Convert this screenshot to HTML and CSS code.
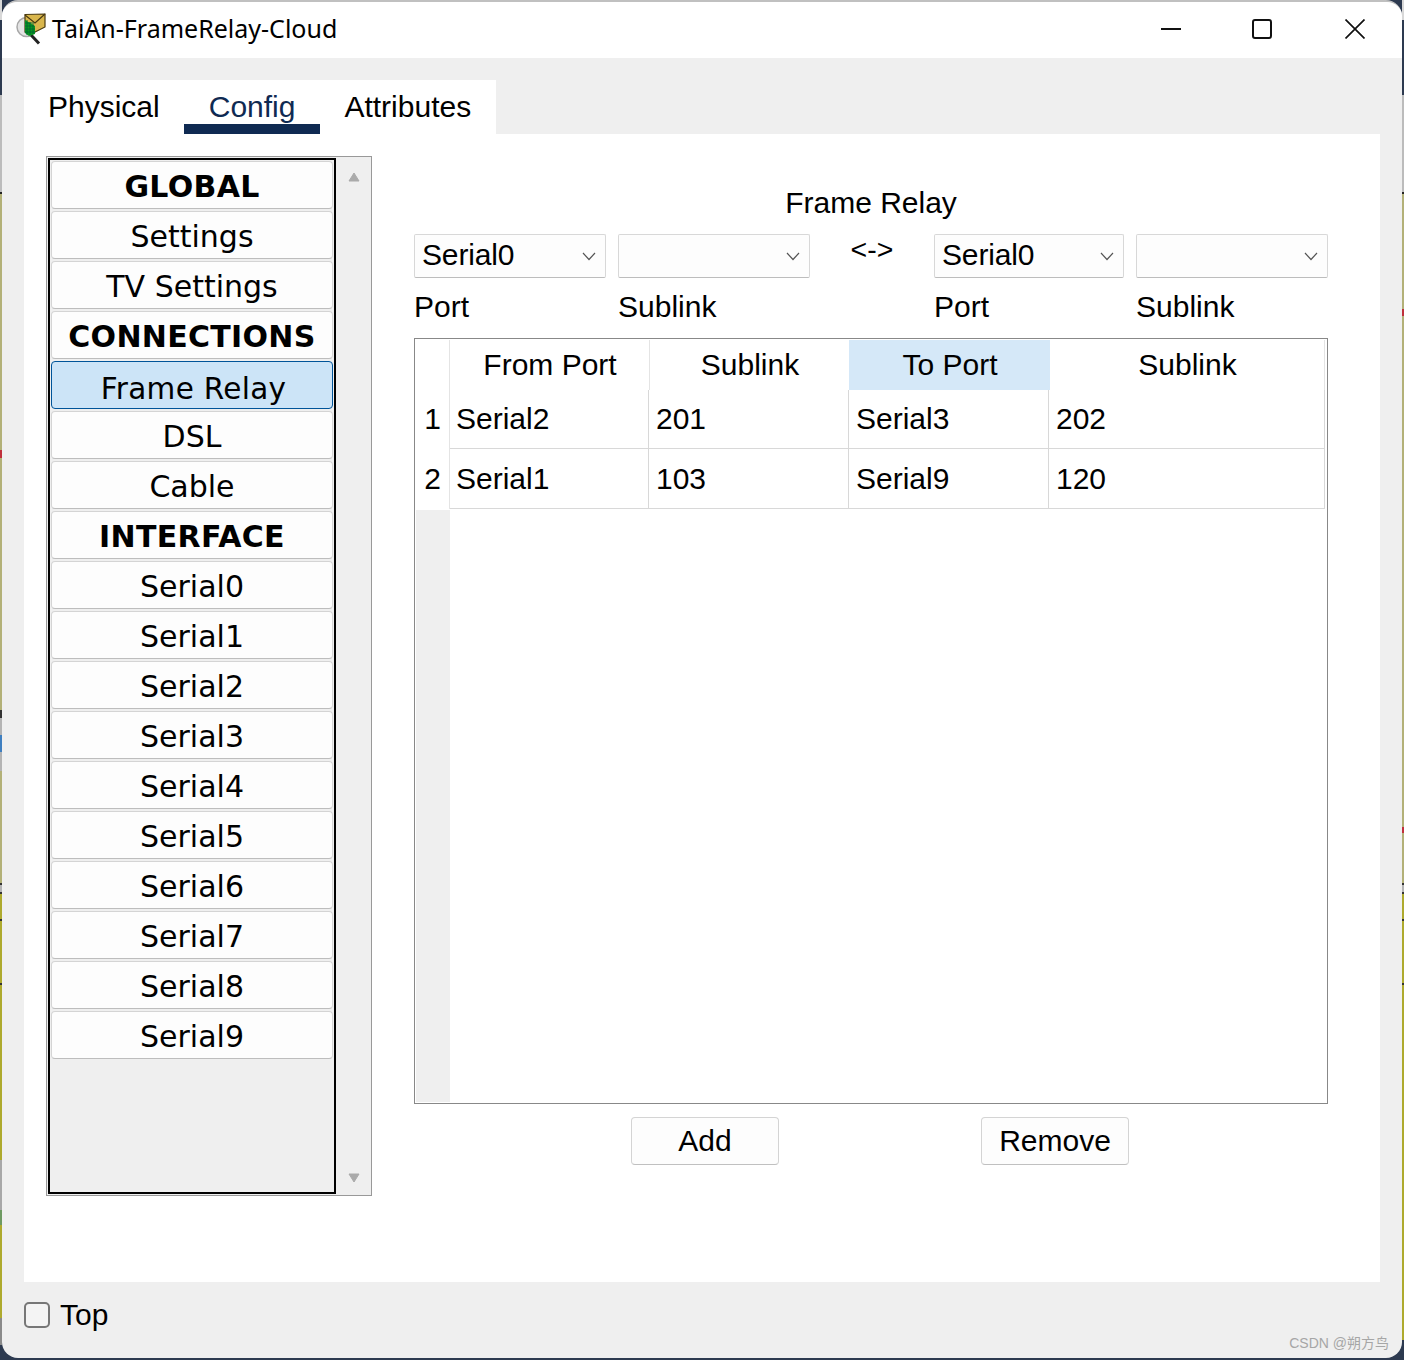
FILE: index.html
```html
<!DOCTYPE html>
<html lang="en">
<head>
<meta charset="utf-8">
<title>TaiAn-FrameRelay-Cloud</title>
<link rel="stylesheet" href="styles.css">
</head>
<body>
<div class="window">
  <header class="titlebar">
    <svg class="app-icon" width="32" height="32" viewBox="0 0 32 32">
      <circle cx="11.5" cy="14" r="9.5" fill="#e4e4e4" stroke="#a8a8a8" stroke-width="1.5"/>
      <path d="M16 22l8 8.5" stroke="#222" stroke-width="3" fill="none"/>
      <path d="M10 1.5l20-.5v13L16 21l-6-2z" fill="#d9b64c" stroke="#4a3a10" stroke-width="1.2"/>
      <path d="M10 2l10 8 10-9" fill="none" stroke="#4a3a10" stroke-width="1.2"/>
      <path d="M10 7l10 6v8l-6 2-4-3z" fill="#0a9a1e"/>
      <path d="M12 7v15M15 9v13M18 11v10M10 10h9M10 13h9M10 16h10M10 19h10" stroke="#063" stroke-width=".9"/>
    </svg>
    <span class="title-text">TaiAn-FrameRelay-Cloud</span>
    <div class="controls">
      <svg width="20" height="20" viewBox="0 0 20 20"><path d="M0 10h20" stroke="#111" stroke-width="2"/></svg>
      <svg width="20" height="20" viewBox="0 0 20 20"><rect x="1" y="1" width="18" height="18" rx="2" fill="none" stroke="#111" stroke-width="2"/></svg>
      <svg class="close" width="20" height="20" viewBox="0 0 20 20"><path d="M.5.5l19 19M19.5.5l-19 19" stroke="#111" stroke-width="1.7"/></svg>
    </div>
  </header>

  <main class="body">
    <nav class="tabs">
      <span class="tab">Physical</span>
      <span class="tab tab-active">Config</span>
      <span class="tab">Attributes</span>
    </nav>

    <section class="pane">
      <aside class="sidebar">
        <div class="menu">
          <button class="item head">GLOBAL</button>
          <button class="item">Settings</button>
          <button class="item">TV Settings</button>
          <button class="item head">CONNECTIONS</button>
          <button class="item selected">Frame Relay</button>
          <button class="item">DSL</button>
          <button class="item">Cable</button>
          <button class="item head">INTERFACE</button>
          <button class="item">Serial0</button>
          <button class="item">Serial1</button>
          <button class="item">Serial2</button>
          <button class="item">Serial3</button>
          <button class="item">Serial4</button>
          <button class="item">Serial5</button>
          <button class="item">Serial6</button>
          <button class="item">Serial7</button>
          <button class="item">Serial8</button>
          <button class="item">Serial9</button>
        </div>
        <div class="scroll">
          <svg width="12" height="10" viewBox="0 0 12 10"><path d="M6 1l5 8H1z" fill="#aaa" stroke="#aaa" stroke-linejoin="round"/></svg>
          <svg width="12" height="10" viewBox="0 0 12 10"><path d="M1 1h10L6 9z" fill="#aaa" stroke="#aaa" stroke-linejoin="round"/></svg>
        </div>
      </aside>

      <div class="config">
        <h1 class="heading">Frame Relay</h1>
        <div class="form">
          <div class="select">Serial0<svg class="chev" width="14" height="9" viewBox="0 0 14 9"><path d="M1 1l6 6.5L13 1" fill="none" stroke="#555" stroke-width="1.2"/></svg></div>
          <div class="select"><svg class="chev" width="14" height="9" viewBox="0 0 14 9"><path d="M1 1l6 6.5L13 1" fill="none" stroke="#555" stroke-width="1.2"/></svg></div>
          <div class="arrow">&lt;-&gt;</div>
          <div class="select narrow">Serial0<svg class="chev" width="14" height="9" viewBox="0 0 14 9"><path d="M1 1l6 6.5L13 1" fill="none" stroke="#555" stroke-width="1.2"/></svg></div>
          <div class="select"><svg class="chev" width="14" height="9" viewBox="0 0 14 9"><path d="M1 1l6 6.5L13 1" fill="none" stroke="#555" stroke-width="1.2"/></svg></div>
          <label class="lbl">Port</label>
          <label class="lbl">Sublink</label>
          <span></span>
          <label class="lbl">Port</label>
          <label class="lbl">Sublink</label>
        </div>

        <div class="table">
          <div class="thead">
            <div class="corner"></div>
            <div class="th">From Port</div>
            <div class="th">Sublink</div>
            <div class="th th-sel">To Port</div>
            <div class="th th-last">Sublink</div>
          </div>
          <div class="tr">
            <div class="rh">1</div>
            <div class="td">Serial2</div>
            <div class="td">201</div>
            <div class="td">Serial3</div>
            <div class="td td-last">202</div>
          </div>
          <div class="tr">
            <div class="rh">2</div>
            <div class="td">Serial1</div>
            <div class="td">103</div>
            <div class="td">Serial9</div>
            <div class="td td-last">120</div>
          </div>
          <div class="filler"></div>
        </div>

        <div class="actions">
          <button class="btn">Add</button>
          <button class="btn">Remove</button>
        </div>
      </div>
    </section>

    <footer class="bottom">
      <span class="check"></span>
      <span>Top</span>
    </footer>
  </main>
  <span class="mark">CSDN @朔方鸟</span>
</div>
</body>
</html>
```
FILE: styles.css
```css
* { box-sizing: border-box; }
html, body { margin: 0; height: 1360px; overflow: hidden; }
body {
  width: 1404px;
  background-color: #2d3a50;
  background-image:
    linear-gradient(to bottom, #d8d8d8 0 20px, #2d3a50 20px 95px, #bcbcbc 95px 192px, #222 192px 194px, #b3b178 194px 450px, #c0303c 450px 458px, #b3b178 458px 710px, #333 710px 718px, #b4b4b4 718px 735px, #3f7fc0 735px 752px, #b4b4b4 752px 771px, #b3b178 771px 883px, #333 883px 885px, #b4b4b4 885px 892px, #333 892px 894px, #aeaa2e 894px 919px, #333 919px 921px, #aeaa2e 921px 983px, #333 983px 985px, #aeaa2e 985px 1160px, #a8a8a8 1160px 1210px, #6e9a62 1210px 1225px, #aeaa2e 1225px 1318px, #8a8a8a 1318px 1345px, #2d3a50 1345px),
    linear-gradient(to bottom, #d8d8d8 0 20px, #2d3a50 20px 95px, #bcbcbc 95px 192px, #222 192px 194px, #b3b178 194px 309px, #c0303c 309px 316px, #b3b178 316px 827px, #c0303c 827px 833px, #b3b178 833px 883px, #333 883px 885px, #b4b4b4 885px 892px, #333 892px 894px, #aeaa2e 894px 919px, #333 919px 921px, #aeaa2e 921px 983px, #333 983px 985px, #aeaa2e 985px 1340px, #2d3a50 1340px);
  background-size: 2px 1360px, 2px 1360px;
  background-position: left top, right top;
  background-repeat: no-repeat;
  font-family: "Liberation Sans", Arial, sans-serif;
  font-size: 30px;
  color: #000;
  padding: 0 2px;
}
.window {
  position: relative;
  height: 1358px;
  border-top: 2px solid #c0c0c0;
  border-radius: 16px;
  overflow: hidden;
  background: #efefef;
  display: flex;
  flex-direction: column;
}
.titlebar {
  height: 56px;
  background: #fff;
  display: flex;
  align-items: center;
  padding: 0 37px 2px 13px;
  flex: none;
}
.app-icon { margin-right: 5px; }
.title-text { font-family: "Noto Sans", sans-serif; font-size: 25px; color: #000; margin-bottom: 2px; }
.controls { margin-left: auto; display: flex; gap: 71px; align-items: center; }
.controls .close { margin-left: 2px; }
.body {
  flex: 1;
  display: flex;
  flex-direction: column;
  padding: 22px 22px 0;
}
.tabs { display: flex; align-self: flex-start; background: #fff; height: 54px; }
.tab { padding: 0 25px; line-height: 54px; }
.tab:first-child { padding: 0 24px; }
.tab:last-child { padding: 0 25px 0 24px; }
.tab-active { color: #0f2a52; box-shadow: inset 0 -10px 0 #0f2a52; }
.pane {
  height: 1148px;
  background: #fff;
  display: flex;
  padding: 22px 0 0 22px;
  gap: 42px;
  flex: none;
}
.sidebar {
  width: 326px;
  height: 1040px;
  border: 1px solid #999;
  padding: 1px 0 1px 1px;
  display: flex;
  background: #efefef;
}
.menu {
  width: 288px;
  border: 2px solid #000;
  padding: 1px;
  display: flex;
  flex-direction: column;
  gap: 2px;
  background: #efefef;
}
.item {
  height: 48px;
  width: 282px;
  flex: none;
  padding: 3px 0 0;
  border: 1px solid #d4d4d4;
  border-bottom: 1px solid #bdbdbd;
  border-radius: 4px;
  background: #fdfdfd;
  font-family: "DejaVu Sans", sans-serif;
  font-size: 30px;
  color: #000;
  text-align: center;
}
.head { font-weight: 700; letter-spacing: .3px; }
.selected { background: #cce4f7; border: 1px solid #005499; padding: 7px 0 0 3px; font-size: 29.5px; letter-spacing: .3px; }
.scroll {
  flex: 1;
  display: flex;
  flex-direction: column;
  justify-content: space-between;
  align-items: center;
  padding: 14px 0 11px;
}
.scroll svg { display: block; }
.config { width: 914px; padding-top: 29px; }
.heading {
  margin: 0 0 13px;
  font-size: 30px;
  font-weight: 400;
  line-height: 36px;
  text-align: center;
  width: 914px;
}
.form {
  display: grid;
  grid-template-columns: 204px 192px 124px 202px 192px;
  grid-template-rows: 44px 36px;
  row-gap: 11px;
}
.select {
  width: 192px;
  height: 44px;
  border: 1px solid #d8d8d8;
  border-bottom-color: #bdbdbd;
  border-radius: 2px;
  background: #fdfdfd;
  padding: 0 9px 3px 7px;
  display: flex;
  align-items: center;
  justify-content: space-between;
  line-height: 40px;
  letter-spacing: -.15px;
}
.select .chev { margin-top: 3px; }
.select.narrow { width: 190px; }
.chev { margin-left: auto; display: block; }
.arrow { text-align: center; font-size: 28.5px; line-height: 30px; }
.lbl { line-height: 36px; }
.table {
  margin-top: 13px;
  height: 766px;
  border: 1px solid #888;
  padding: 1px;
  display: flex;
  flex-direction: column;
}
.thead { display: flex; height: 50px; flex: none; }
.corner { width: 34px; border-right: 1px solid #e4e4e4; }
.th {
  width: 200px;
  padding-left: 1px;
  text-align: center;
  line-height: 50px;
  border-right: 1px solid #e4e4e4;
  background: #fff;
}
.th-sel { background: #d5e8f8; border-right: 0; width: 201px; margin-left: -1px; }
.th-last { width: 275px; margin-left: 0; }
.tr { display: flex; height: 60px; flex: none; }
.thead + .tr { height: 59px; }
.rh {
  width: 34px;
  flex: none;
  text-align: center;
  line-height: 58px;
  border-right: 1px solid #e4e4e4;
}
.td {
  width: 199px;
  flex: none;
  padding-left: 6px;
  line-height: 58px;
  border-right: 1px solid #d8d8d8;
  border-bottom: 1px solid #d8d8d8;
}
.td + .td { width: 200px; padding-left: 7px; }
.td.td-last { width: 276px; }
.tr + .tr .rh, .tr + .tr .td { line-height: 60px; }
.filler { width: 34px; flex: 1; background: #efefef; margin-top: 1px; }
.actions {
  margin-top: 13px;
  display: flex;
  padding-left: 217px;
  gap: 202px;
}
.btn {
  width: 148px;
  height: 48px;
  padding: 0;
  border: 1px solid #d4d4d4;
  border-bottom-color: #c0c0c0;
  border-radius: 4px;
  background: #fdfdfd;
  font-family: "Liberation Sans", Arial, sans-serif;
  font-size: 30px;
  color: #000;
}
.bottom {
  flex: 1;
  display: flex;
  align-items: center;
  padding-bottom: 10px;
  gap: 10px;
}
.check {
  width: 26px;
  height: 26px;
  border: 2px solid #777;
  border-radius: 5px;
  background: #f4f4f4;
}
.mark {
  position: absolute;
  right: 13px;
  bottom: 6px;
  font-family: "Liberation Sans", "Noto Sans CJK SC", sans-serif;
  font-size: 14px;
  color: #a6a6a6;
}
```
